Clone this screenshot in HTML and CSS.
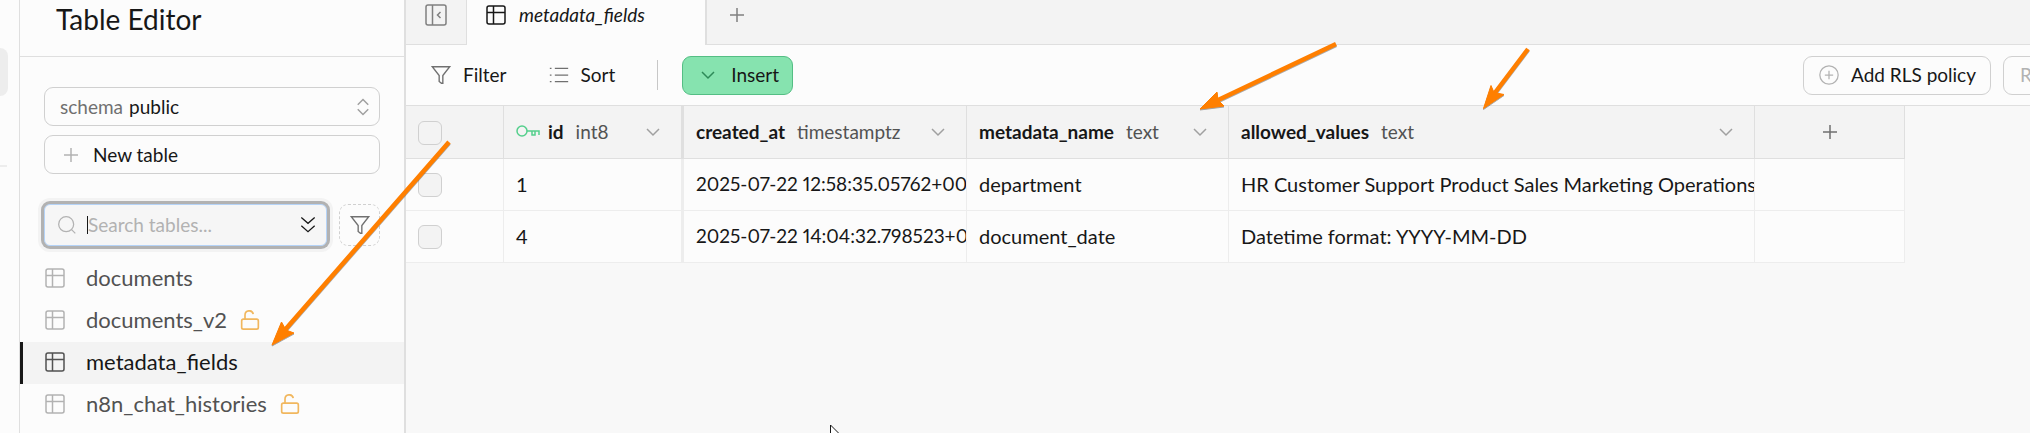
FILE: index.html
```html
<!DOCTYPE html>
<html lang="en">
<head>
<meta charset="utf-8">
<title>Table Editor</title>
<link rel="stylesheet" href="styles.css">
</head>
<body>
<svg class="sprite" aria-hidden="true">
  <symbol id="i-table" viewBox="0 0 24 24"><rect x="3" y="3" width="18" height="18" rx="2"/><path d="M3 9.500h18M9.500 3v18"/></symbol>
  <symbol id="i-lock" viewBox="0 0 24 24"><rect x="2" y="11" width="20" height="12" rx="2"/><path d="M6 11V6a5 5 0 0 1 9.900-1"/></symbol>
  <symbol id="i-down" viewBox="0 0 24 24"><path d="m6 9 6 6 6-6"/></symbol>
  <symbol id="i-plus" viewBox="0 0 24 24"><path d="M5 12h14M12 5v14"/></symbol>
  <symbol id="i-funnel" viewBox="0 0 24 24"><path d="M2.500 3h19L14 12.500V21h-1.500L10 19v-6.500z"/></symbol>
</svg>
<div class="app">
  <nav class="rail" aria-label="Main"><span class="rail-active"></span><span class="rail-line"></span></nav>
  <aside class="sidebar">
    <header class="side-head"><h1>Table Editor</h1></header>
    <div class="side-tools">
      <button class="btn schema"><span class="muted">schema</span> public
        <svg class="icon updown" viewBox="0 0 24 24"><path d="m5 9 7-7 7 7M5 15l7 7 7-7"/></svg></button>
      <button class="btn new-table"><svg class="icon pale"><use href="#i-plus"/></svg>New table</button>
    </div>
    <div class="search-row">
      <label class="search">
        <svg class="icon pale" viewBox="0 0 24 24"><circle cx="11" cy="11" r="9"/><path d="m17.500 17.500 4.500 4.500"/></svg>
        <span class="caret"></span>
        <input type="text" placeholder="Search tables..." aria-label="Search tables">
        <svg class="icon dark" viewBox="0 0 24 24"><path d="m4 3 8 7 8-7M4 13l8 7 8-7"/></svg>
      </label>
      <button class="filter-btn" aria-label="Filter tables"><svg class="icon"><use href="#i-funnel"/></svg></button>
    </div>
    <ul class="tables">
      <li><a href="#documents"><svg class="icon"><use href="#i-table"/></svg>documents</a></li>
      <li><a href="#documents_v2"><svg class="icon"><use href="#i-table"/></svg>documents_v2<svg class="icon lock"><use href="#i-lock"/></svg></a></li>
      <li><a class="current" href="#metadata_fields"><svg class="icon"><use href="#i-table"/></svg>metadata_fields</a></li>
      <li><a href="#n8n_chat_histories"><svg class="icon"><use href="#i-table"/></svg>n8n_chat_histories<svg class="icon lock"><use href="#i-lock"/></svg></a></li>
    </ul>
  </aside>
  <main class="main">
    <div class="tabs">
      <button class="collapse" aria-label="Collapse sidebar"><svg class="icon" viewBox="0 0 24 24"><rect x="2" y="2" width="20" height="20" rx="2"/><path d="M8.500 2v20M16.500 9l-3 3 3 3"/></svg></button>
      <button class="tab"><svg class="icon"><use href="#i-table"/></svg>metadata_fields</button>
      <button class="add-tab" aria-label="New tab"><svg class="icon"><use href="#i-plus"/></svg></button>
    </div>
    <div class="toolbar">
      <button class="plain"><svg class="icon"><use href="#i-funnel"/></svg>Filter</button>
      <button class="plain sort"><svg class="icon" viewBox="0 0 24 24"><path d="M7 4h16M7 12h16M7 20h16M1 4h2M1 12h2M1 20h2"/></svg>Sort</button>
      <span class="divider"></span>
      <button class="btn insert"><svg class="icon"><use href="#i-down"/></svg>Insert</button>
      <div class="actions">
        <button class="btn rls"><svg class="icon pale" viewBox="0 0 24 24"><circle cx="12" cy="12" r="11"/><path d="M12 7v10M7 12h10"/></svg>Add RLS policy</button>
        <button class="btn role">Role</button>
      </div>
    </div>
    <table class="grid">
      <colgroup><col class="c-check"><col class="c-id"><col class="c-created"><col class="c-name"><col class="c-values"><col class="c-add"></colgroup>
      <thead><tr>
        <th><input type="checkbox" aria-label="Select all rows"></th>
        <th class="frozen"><div class="head"><svg class="key" viewBox="0 0 24 14"><circle cx="6" cy="6" r="5"/><path d="M11 6h12v4M16 6v4h3V6"/></svg>id<span class="type">int8</span><svg class="icon"><use href="#i-down"/></svg></div></th>
        <th><div class="head">created_at<span class="type">timestamptz</span><svg class="icon"><use href="#i-down"/></svg></div></th>
        <th><div class="head">metadata_name<span class="type">text</span><svg class="icon"><use href="#i-down"/></svg></div></th>
        <th><div class="head">allowed_values<span class="type">text</span><svg class="icon"><use href="#i-down"/></svg></div></th>
        <th><button class="add-col" aria-label="Add column"><svg class="icon"><use href="#i-plus"/></svg></button></th>
      </tr></thead>
      <tbody>
        <tr><td><input type="checkbox" aria-label="Select row 1"></td><td class="frozen">1</td><td class="time">2025-07-22 12:58:35.05762+00</td><td>department</td><td>HR Customer Support Product Sales Marketing Operations</td><td></td></tr>
        <tr><td><input type="checkbox" aria-label="Select row 4"></td><td class="frozen">4</td><td class="time">2025-07-22 14:04:32.798523+00</td><td>document_date</td><td>Datetime format: YYYY-MM-DD</td><td></td></tr>
      </tbody>
    </table>
  </main>
</div>
<svg class="marks" width="2030" height="433" viewBox="0 0 2030 433" aria-hidden="true">
  <g class="arrows">
    <path d="M449 142 284 331M1336 44 1216 101M1528 49 1494 94"/>
    <path class="tip" d="m272 345 9.500-23 4.500 8 8 3zM1200 109l17-17 1 8 6 6zM1483.500 108.500l7.500-23 3 7 10 2z"/>
  </g>
  <path class="cursor" d="M830.500 425v20l14-6z"/>
</svg>
</body>
</html>
```

FILE: styles.css
```css
* { box-sizing: border-box; }
body {
  margin: 0;
  min-height: 100vh;
  overflow: hidden;
  background: #f8f8f8;
  color: #171717;
  font: 19px/24px Lato, "Open Sans", sans-serif;
}
button, input { font: inherit; color: inherit; }
button { background: none; border: 0; padding: 0; }
.sprite { display: none; }
.icon { width: 24px; height: 24px; flex: none; }
svg { fill: none; stroke: currentColor; stroke-width: 1.5; }
.pale { color: #b2b2b2; }
.dark { color: #171717; }
.muted { color: #707070; }
.app { display: flex; height: 100vh; }

.rail { width: 20px; flex: none; background: #fcfcfc; border-right: 1px solid #dfdfdf; padding-top: 48px; }
.rail-active { display: block; width: 8px; height: 48px; background: #ededed; border-radius: 0 8px 8px 0; }
.rail-line { display: block; width: 7px; height: 2px; margin-top: 69px; background: #ededed; }

.sidebar { width: 386px; flex: none; background: #fcfcfc; border-right: 2px solid #dfdfdf; }
.side-head { height: 57px; padding: 1px 36px 0; border-bottom: 1px solid #dfdfdf; }
h1 { margin: 0; font-size: 28px; line-height: 36px; font-weight: 400; }
.side-tools { display: grid; gap: 9px; padding: 30px 24px; }
.btn { display: flex; align-items: center; height: 39px; border: 1px solid #d0d0d0; border-radius: 9px; background: #fff0; }
.schema { padding: 0 4px 0 15px; gap: 6px; }
.updown { width: 24px; height: 18px; margin-left: auto; color: #a0a0a0; stroke-width: 2; }
.new-table { padding: 0 14px; gap: 10px; }
.search-row { display: flex; gap: 12px; padding: 0 24px; }
.search {
  display: flex; align-items: center; flex: 1; min-width: 0; height: 42px; padding: 0 8px 0 12px;
  background: #f6f6f6; border: 1px solid #b5d3f7; border-radius: 6px;
  box-shadow: 0 0 0 3px #b2b2b2, 0 0 0 6px #f3f3f3;
}
.search .icon { width: 20px; height: 20px; }
.search input { flex: 1; width: 0; min-width: 0; padding: 0; border: 0; outline: 0; background: none; }
.search input::placeholder { color: #b2b2b2; opacity: 1; }
.caret { width: 1px; height: 18px; margin-left: 10px; background: #171717; }
.filter-btn { flex: none; width: 41px; display: grid; place-items: center; border: 1px dashed #d0d0d0; border-radius: 9px; color: #707070; }
.filter-btn .icon, .plain .icon { width: 22px; height: 22px; }
.tables { list-style: none; margin: 12px 0 0; padding: 0; }
.tables a {
  display: flex; align-items: center; height: 42px; padding: 0 0 2px 23px;
  font-size: 22px; color: #525252; text-decoration: none;
}
.tables .icon { margin-right: 19px; color: #b2b2b2; }
.tables .lock { width: 20px; height: 20px; margin: 0 0 0 13px; color: #f1b75e; stroke-width: 2; }
.tables .current { background: #f3f3f3; color: #171717; box-shadow: inset 3px 0 #171717; }
.tables .current .icon { color: #525252; }

.main { flex: 1; min-width: 0; overflow: hidden; }
.tabs { display: flex; height: 45px; background: #f3f3f3; }
.tabs button { display: flex; align-items: center; padding-bottom: 15px; border-bottom: 1px solid #dfdfdf; }
.tabs .collapse { width: 61px; justify-content: center; border-right: 1px solid #dfdfdf; color: #808080; }
.tabs .tab { width: 238px; padding-left: 17px; gap: 11px; background: #fcfcfc; border-bottom: 0; font-size: 19px; font-style: italic; }
.tabs .add-tab { flex: 1; padding-left: 18px; border-left: 2px solid #dfdfdf; color: #808080; }
.toolbar { display: flex; align-items: center; height: 61px; padding-left: 24px; background: #fcfcfc; border-bottom: 1px solid #dfdfdf; }
.plain { display: flex; align-items: center; gap: 11px; }
.plain .icon { color: #707070; }
.sort { margin-left: 43px; }
.sort .icon { width: 20px; height: 20px; }
.divider { width: 1px; height: 30px; margin: 0 24px 0 42px; background: #c7c7c7; }
.insert { width: 111px; padding-left: 13px; gap: 11px; background: #86e3af; border-color: #54be84; }
.insert .icon { color: #2d8a58; }
.actions { display: flex; gap: 12px; margin: 0 -26px 0 auto; }
.rls { width: 188px; padding-left: 15px; gap: 12px; }
.rls .icon { width: 20px; height: 20px; }
.role { width: 53px; padding-left: 16px; color: #b2b2b2; }

.grid { table-layout: fixed; width: 1499px; border-spacing: 0; background: #fcfcfc; }
.c-check { width: 98px; }
.c-id { width: 180px; }
.c-created { width: 283px; }
.c-name { width: 262px; }
.c-values { width: 526px; }
.c-add { width: 150px; }
th, td {
  height: 52px; padding: 0 0 0 12px; overflow: hidden; white-space: nowrap; text-align: left;
  border-right: 1px solid #ededed; border-bottom: 1px solid #ededed;
}
td { padding-bottom: 2px; font-size: 20px; }
.time { font-size: 19px; font-variant-numeric: proportional-nums; }
th { height: 53px; background: #f3f3f3; border-color: #dfdfdf; }
.frozen { border-right-width: 3px; }
.head { display: flex; align-items: center; padding-right: 16px; }
.head .icon { margin-left: auto; color: #a0a0a0; }
.type { margin-left: 12px; font-weight: 400; color: #525252; }
.key { width: 24px; height: 14px; margin-right: 8px; color: #54cf8c; }
.add-col { display: grid; width: 100%; padding-right: 12px; place-items: center; color: #707070; }
input[type="checkbox"] {
  appearance: none; display: block; width: 24px; height: 24px; margin: 2px 0 0;
  border: 1px solid #d0d0d0; border-radius: 6px; background: #f3f3f3;
}

.marks { position: absolute; top: 0; left: 0; pointer-events: none; }
.arrows { stroke: #ff7f00; stroke-width: 4.500; filter: drop-shadow(0 1px 0 #0005); }
.tip { fill: #ff7f00; stroke-width: 1; }
.cursor { fill: #fff; stroke: #171717; stroke-width: 1; }
```
